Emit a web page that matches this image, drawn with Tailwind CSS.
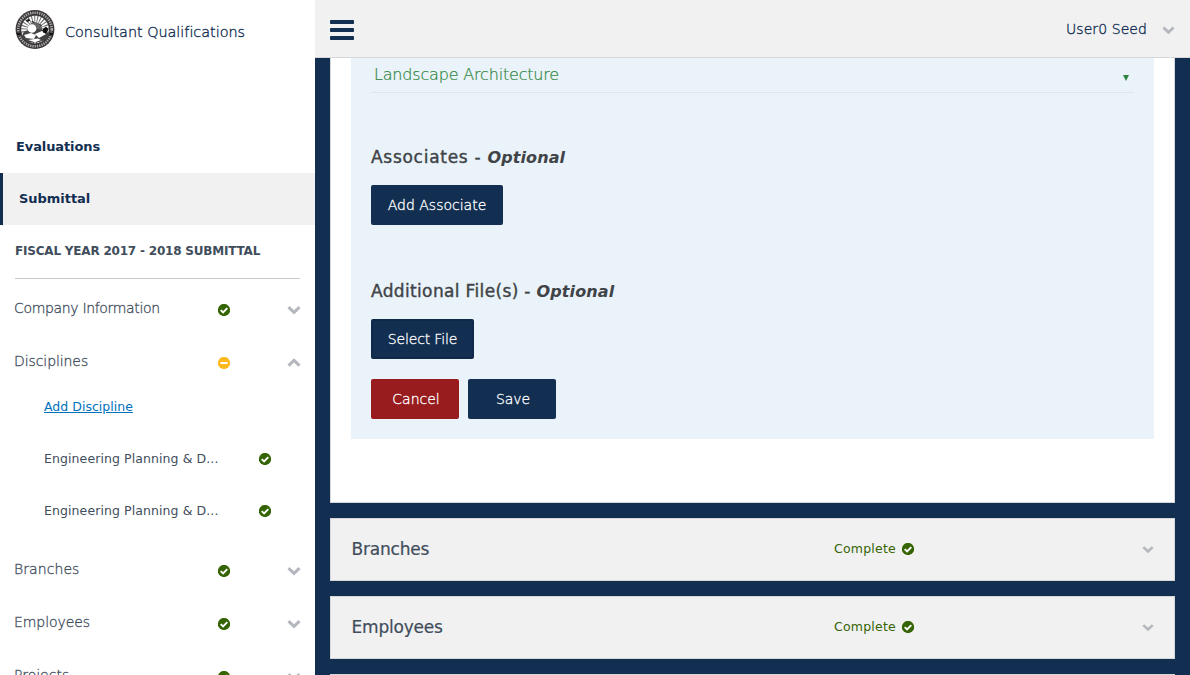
<!DOCTYPE html>
<html lang="en"><head><meta charset="utf-8"><title>Consultant Qualifications</title>
<script src="https://cdn.jsdelivr.net/npm/@tailwindcss/browser@4"></script></head>
<body class="h-[675px] overflow-hidden bg-[#122e51] font-['DejaVu_Sans',sans-serif] text-[#414d5c]">
<svg class="hidden">
<symbol id="ok" viewBox="0 0 12 12"><circle cx="6" cy="6" r="6.1" fill="#356404"/><path d="M2.7 6.1 5.1 8.4 9.3 4.2" fill="none" stroke="#fff" stroke-width="1.9"/></symbol>
<symbol id="minus" viewBox="0 0 12 12"><circle cx="6" cy="6" r="6.1" fill="#fdb81e"/><path d="M2.5 6h7" stroke="#fff" stroke-width="2"/></symbol>
<symbol id="down" viewBox="0 0 14 10"><path d="M1.5 2.2 7 7.4l5.5-5.2" fill="none" stroke="#b4b7bd" stroke-width="3"/></symbol>
<symbol id="up" viewBox="0 0 14 10"><path d="M1.5 7.6 7 2.4l5.5 5.2" fill="none" stroke="#b4b7bd" stroke-width="3"/></symbol>
</svg>
<div class="flex h-full">
<aside class="flex h-full w-[315px] shrink-0 flex-col overflow-hidden bg-white">
  <header class="flex h-[121px] shrink-0 items-start pt-[10px] pl-[15px] text-[#122e51]">
    <svg class="h-[39px] w-10" viewBox="0 0 40 39">
      <circle cx="20" cy="19.5" r="19.4" fill="#3a3638"/>
      <circle cx="20" cy="19.5" r="16.8" fill="none" stroke="#aaa" stroke-width="2.6" stroke-dasharray="1.3 1"/>
      <circle cx="20" cy="19.5" r="14" fill="#666"/>
      <circle cx="20" cy="19.5" r="10.5" fill="none" stroke="#fff" stroke-width="6.4" stroke-dasharray="1.7 .9"/>
      <path d="M8 23q4-4 9-2l6-2 7 1 4 4-4 6-8 2.500H13l-5-5z" fill="#444"/>
      <circle cx="17" cy="18.500" r="4.300" fill="#fff"/>
      <path d="m9 25 7-2 5 2-2 4-8-1zM20 24l7-3 4 3-7 4zM13 30l10-1.500 3 1.500-6 2.300z" fill="#fff"/>
      <path d="m28 19 3-2.500 2.500 3-2.500 4-3-1zM11 10l3-1 1 2-3 1zM16 12l2-1 2 2zM24 14l3 1-1 1z" fill="#111"/>
      <path d="M1.500 22.500h4v3h-3zM38.500 22.500h-4v3h3z" fill="#111"/>
    </svg>
    <span class="mt-3 ml-[10px] text-[14.4px] leading-5 font-extralight tracking-[-0.02px] whitespace-nowrap [-webkit-text-stroke:0.35px]">Consultant Qualifications</span>
  </header>
  <div class="flex h-[52px] shrink-0 items-center pl-4 text-[13px] font-bold tracking-[-0.1px] text-[#122e51]">Evaluations</div>
  <div class="flex h-[52px] shrink-0 items-center border-l-3 border-[#122e51] bg-[#f1f1f1] pl-4 text-[13px] font-bold tracking-[-0.04px] text-[#122e51]">Submittal</div>
  <div class="mx-[15px] flex h-[54px] shrink-0 items-center border-b border-[#c8c9cb] pb-[2px] text-xs font-bold tracking-[-0.2px] whitespace-nowrap">FISCAL YEAR 2017 - 2018 SUBMITTAL</div>
  <nav class="mt-[2px] text-sm font-extralight [-webkit-text-stroke:0.3px]">
    <div class="flex h-[53px] items-center pl-[14px]"><span class="w-[204px] tracking-[-0.33px]">Company Information</span><svg class="mt-1 size-3"><use href="#ok"/></svg><svg class="mt-1 ml-[57px] h-[10px] w-[14px]"><use href="#down"/></svg></div>
    <div class="flex h-[46px] items-start pt-[17px] pl-[14px]"><span class="w-[204px] tracking-[-0.08px]">Disciplines</span><svg class="mt-[6px] size-3"><use href="#minus"/></svg><svg class="mt-[7px] ml-[57px] h-[10px] w-[14px]"><use href="#up"/></svg></div>
    <div class="h-[162px] pl-[44px] text-[12.5px] font-normal [-webkit-text-stroke:0px]">
      <div class="flex h-[52px] items-center pt-[2px] tracking-[0.02px] text-[#0071bc] underline">Add Discipline</div>
      <div class="flex h-[52px] items-center"><span class="w-[215px] pt-[2px] tracking-[0.09px]">Engineering Planning &amp; D...</span><svg class="mt-px size-3"><use href="#ok"/></svg></div>
      <div class="flex h-[52px] items-center"><span class="w-[215px] pt-[2px] tracking-[0.09px]">Engineering Planning &amp; D...</span><svg class="mt-px size-3"><use href="#ok"/></svg></div>
    </div>
    <div class="flex h-[53px] items-center pl-[14px]"><span class="w-[204px] tracking-[0.08px]">Branches</span><svg class="mt-1 size-3"><use href="#ok"/></svg><svg class="mt-1 ml-[57px] h-[10px] w-[14px]"><use href="#down"/></svg></div>
    <div class="flex h-[53px] items-center pl-[14px]"><span class="w-[204px] tracking-[-0.08px]">Employees</span><svg class="mt-1 size-3"><use href="#ok"/></svg><svg class="mt-1 ml-[57px] h-[10px] w-[14px]"><use href="#down"/></svg></div>
    <div class="flex h-[53px] items-center pl-[14px]"><span class="w-[204px]">Projects</span><svg class="mt-1 size-3"><use href="#ok"/></svg><svg class="mt-1 ml-[57px] h-[10px] w-[14px]"><use href="#down"/></svg></div>
  </nav>
</aside>
<div class="flex min-w-0 flex-1 flex-col overflow-hidden">
  <header class="flex h-[58px] shrink-0 items-center justify-between border-b border-[#d6d7d9] bg-[#f1f1f1] px-[15px] text-[#122e51]">
    <svg class="mt-[3px] h-5 w-6" viewBox="0 0 24 20" fill="#122e51"><rect width="24" height="4" rx=".8"/><rect y="8" width="24" height="4" rx=".8"/><rect y="16" width="24" height="4" rx=".8"/></svg>
    <div class="flex items-center text-sm font-extralight [-webkit-text-stroke:0.35px]"><span class="w-[96px] tracking-[0.07px]">User0 Seed</span><svg class="mt-[3px] h-[10px] w-[13px]"><use href="#down"/></svg></div>
  </header>
  <main class="px-[15px]">
    <section class="h-[445px] border border-t-0 border-[#d6d7d9] bg-white px-5">
      <div class="h-[381px] bg-[#eaf3f9] px-5 text-[#404347]">
        <div class="flex h-[35px] items-center justify-between border-b border-[#e3e4e6] pr-[5px] pl-[3px] text-base font-extralight tracking-[-0.18px] text-[#2e8540] [-webkit-text-stroke:0.2px]">Landscape Architecture<svg class="mt-[5px] size-[6px]" viewBox="0 0 6 6"><path d="M0 0h6L3 6z" fill="#2e8540"/></svg></div>
        <h3 class="h-[77px] pt-[52px] text-[17px] leading-6 font-normal [-webkit-text-stroke:0.4px]"><span class="tracking-[0.72px]">Associates -&nbsp;</span><em class="text-base font-bold tracking-[0.1px] [-webkit-text-stroke:0px]">Optional</em></h3>
        <button class="mt-[15px] block h-10 w-[132px] rounded-[2px] bg-[#122e51] text-sm font-extralight text-white [-webkit-text-stroke:0.3px]">Add Associate</button>
        <h3 class="h-[79px] pt-[54px] text-[17px] leading-6 font-normal [-webkit-text-stroke:0.4px]"><span class="tracking-[0.35px]">Additional File(s) -&nbsp;</span><em class="text-base font-bold tracking-[0.1px] [-webkit-text-stroke:0px]">Optional</em></h3>
        <button class="mt-[15px] block h-10 w-[103px] rounded-[2px] border-2 border-[#10284a] bg-[#122e51] text-sm font-extralight tracking-[-0.15px] text-white [-webkit-text-stroke:0.3px]">Select File</button>
        <div class="mt-5 flex gap-[9px] text-sm font-extralight text-white [-webkit-text-stroke:0.3px]"><button class="h-10 w-[88px] rounded-[2px] bg-[#981b1e] pl-[2px]">Cancel</button><button class="h-10 w-[88px] rounded-[2px] bg-[#122e51] pl-[2px] tracking-[-0.1px]">Save</button></div>
      </div>
    </section>
    <section class="mt-[15px] flex h-[63px] items-center border border-[#d6d7d9] bg-[#f1f1f1] pl-[20.5px]"><h2 class="w-[482.5px] text-[17px] tracking-[-0.2px] [-webkit-text-stroke:0.2px]">Branches</h2><span class="w-[68px] text-[12.5px] tracking-[0.22px] text-[#356404]">Complete</span><svg class="mb-px size-3"><use href="#ok"/></svg><svg class="mb-px ml-[228px] h-[9px] w-[12px]"><use href="#down"/></svg></section>
    <section class="mt-[15px] flex h-[63px] items-center border border-[#d6d7d9] bg-[#f1f1f1] pl-[20.5px]"><h2 class="w-[482.5px] text-[17px] tracking-[-0.2px] [-webkit-text-stroke:0.2px]">Employees</h2><span class="w-[68px] text-[12.5px] tracking-[0.22px] text-[#356404]">Complete</span><svg class="mb-px size-3"><use href="#ok"/></svg><svg class="mb-px ml-[228px] h-[9px] w-[12px]"><use href="#down"/></svg></section>
    <section class="mt-[15px] h-[63px] border border-[#d6d7d9] bg-[#f1f1f1]"></section>
  </main>
</div></div>
</body></html>
